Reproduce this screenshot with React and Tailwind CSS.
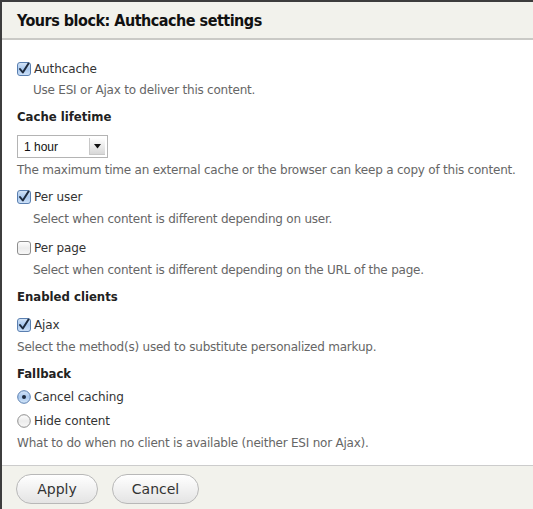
import React from "react";

const font = { fontFamily: '"DejaVu Sans", "Liberation Sans", sans-serif' };
const boldFont = { fontFamily: '"DejaVu Sans Condensed", "Liberation Sans", sans-serif', fontStretch: "condensed" };

function Check({ checked }) {
  const id = checked ? "cbg1" : "cbg0";
  return (
    <svg width="14" height="14" viewBox="0 0 14 14" className="shrink-0">
      <defs>
        <linearGradient id={id} x1="0" y1="0" x2="0" y2="1">
          {checked ? (
            <>
              <stop offset="0" stopColor="#d6e6f8" />
              <stop offset="0.5" stopColor="#a9c8ee" />
              <stop offset="1" stopColor="#cfe2f8" />
            </>
          ) : (
            <>
              <stop offset="0" stopColor="#ffffff" />
              <stop offset="0.5" stopColor="#ececec" />
              <stop offset="1" stopColor="#f8f8f8" />
            </>
          )}
        </linearGradient>
      </defs>
      <rect x="0.5" y="0.5" width="13" height="13" rx="2.5" fill={`url(#${id})`} stroke={checked ? "#5a7fb0" : "#8e8e8e"} />
      {checked && <path d="M3 7 L5.8 10.5 L11.5 1.5" fill="none" stroke="#1d2a3d" strokeWidth="2" strokeLinecap="round" strokeLinejoin="round" />}
    </svg>
  );
}

function Radio({ checked }) {
  const id = checked ? "rg1" : "rg0";
  return (
    <svg width="14" height="14" viewBox="0 0 14 14" className="shrink-0">
      <defs>
        <linearGradient id={id} x1="0" y1="0" x2="0" y2="1">
          {checked ? (
            <>
              <stop offset="0" stopColor="#d6e6f8" />
              <stop offset="0.5" stopColor="#a9c8ee" />
              <stop offset="1" stopColor="#d6e8fa" />
            </>
          ) : (
            <>
              <stop offset="0" stopColor="#ffffff" />
              <stop offset="0.5" stopColor="#ececec" />
              <stop offset="1" stopColor="#f8f8f8" />
            </>
          )}
        </linearGradient>
      </defs>
      <circle cx="7" cy="7" r="6.3" fill={`url(#${id})`} stroke={checked ? "#5a7fb0" : "#8e8e8e"} />
      {checked && <circle cx="7" cy="7" r="2" fill="#1d2a3d" />}
    </svg>
  );
}

function Option({ type = "check", checked, label }) {
  return (
    <div className="flex items-center gap-[3px] h-[16px] text-[12px] tracking-[-0.1px] text-[#333] whitespace-nowrap">
      {type === "check" ? <Check checked={checked} /> : <Radio checked={checked} />}
      <span className="leading-none">{label}</span>
    </div>
  );
}

function Desc({ children, indent }) {
  return (
    <div className={`h-[12px] text-[12px] leading-none tracking-[-0.22px] text-[#666] whitespace-nowrap ${indent ? "pl-[16px]" : ""}`}>
      {children}
    </div>
  );
}

function Heading({ children }) {
  return (
    <div className="h-[13px] text-[13px] font-bold leading-none text-[#222] whitespace-nowrap" style={boldFont}>
      {children}
    </div>
  );
}

export default function App() {
  return (
    <div className="w-[533px] h-[509px] bg-[#3d3d3d] pt-[2px] pl-[2px] overflow-hidden" style={font}>
      <div className="w-full h-full bg-white flex flex-col">
        <div className="h-[38px] shrink-0 bg-[#f2f2ec] border-b-2 border-[#cacac6] flex items-center pl-[15px]">
          <h1 className="text-[16px] tracking-[-0.5px] font-bold text-[#111] leading-none pt-[2px] whitespace-nowrap" style={boldFont}>
            Yours block: Authcache settings
          </h1>
        </div>
        <div className="flex-1 min-h-0 overflow-hidden flex flex-col pl-[15px] pt-[21px]">
          <Option checked label="Authcache" />
          <div className="mt-[7px]"><Desc indent>Use ESI or Ajax to deliver this content.</Desc></div>
          <div className="mt-[14px]"><Heading>Cache lifetime</Heading></div>
          <div className="mt-[12px] w-[91px] h-[23px] border border-[#b4b4b4] bg-white flex items-center justify-between pl-[6px] pr-[2px]">
            <span className="text-[12px] text-[#111] leading-none" style={{ fontFamily: '"Liberation Sans", sans-serif' }}>1 hour</span>
            <div className="w-[16px] h-[17px] bg-gradient-to-b from-[#ffffff] to-[#d8d8d8] border-l border-b border-[#c8c8c8] flex items-center justify-center">
              <svg width="7" height="5" viewBox="0 0 7 5"><path d="M0 0 H7 L3.5 4.5 Z" fill="#111" /></svg>
            </div>
          </div>
          <div className="mt-[6px]"><Desc>The maximum time an external cache or the browser can keep a copy of this content.</Desc></div>
          <div className="mt-[13px]"><Option checked label="Per user" /></div>
          <div className="mt-[8px]"><Desc indent>Select when content is different depending on user.</Desc></div>
          <div className="mt-[15px]"><Option label="Per page" /></div>
          <div className="mt-[8px]"><Desc indent>Select when content is different depending on the URL of the page.</Desc></div>
          <div className="mt-[14px]"><Heading>Enabled clients</Heading></div>
          <div className="mt-[14px]"><Option checked label="Ajax" /></div>
          <div className="mt-[8px]"><Desc>Select the method(s) used to substitute personalized markup.</Desc></div>
          <div className="mt-[14px]"><Heading>Fallback</Heading></div>
          <div className="mt-[9px]"><Option type="radio" checked label="Cancel caching" /></div>
          <div className="mt-[8px]"><Option type="radio" label="Hide content" /></div>
          <div className="mt-[8px]"><Desc>What to do when no client is available (neither ESI nor Ajax).</Desc></div>
        </div>
        <div className="h-[44px] shrink-0 bg-[#f2f2ec] border-t border-[#cccccc] flex items-start pt-[8px] pl-[14px] gap-[14px]">
          <button className="w-[82px] h-[30px] rounded-full border border-[#b8b8b8] bg-gradient-to-b from-[#ffffff] to-[#e4e4e4] text-[14px] text-[#333]">Apply</button>
          <button className="w-[87px] h-[30px] rounded-full border border-[#b8b8b8] bg-gradient-to-b from-[#ffffff] to-[#e4e4e4] text-[14px] text-[#333]">Cancel</button>
        </div>
      </div>
    </div>
  );
}
